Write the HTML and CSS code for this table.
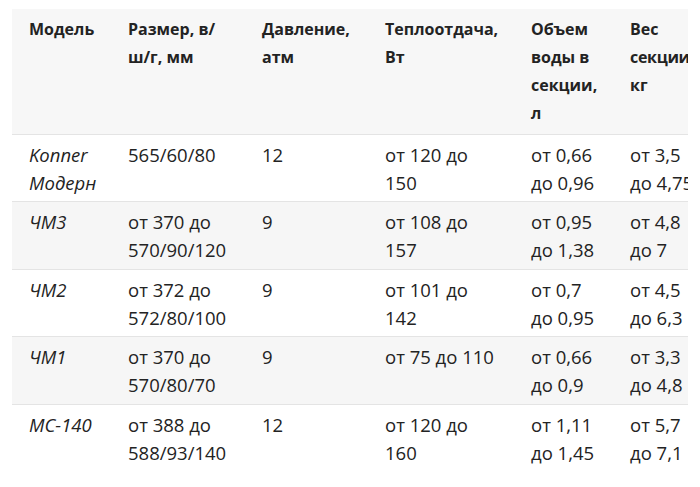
FILE: index.html
```html
<!DOCTYPE html>
<html lang="ru">
<head>
<meta charset="utf-8">
<title>Таблица радиаторов</title>
<link rel="stylesheet" href="styles.css">
</head>
<body>
<div class="wrap">
  <table class="spec">
    <colgroup>
      <col class="c1"><col class="c2"><col class="c3"><col class="c4"><col class="c5"><col class="c6">
    </colgroup>
    <thead>
      <tr>
        <th>Модель</th>
        <th>Размер, в/<wbr><span class="nw">ш/г,</span> мм</th>
        <th>Давление, атм</th>
        <th>Теплоотдача, Вт</th>
        <th>Объем воды в секции, л</th>
        <th>Вес <span class="tight">секции</span> кг</th>
      </tr>
    </thead>
    <tbody>
      <tr>
        <td class="model">Konner Модерн</td>
        <td>565/60/80</td>
        <td>12</td>
        <td>от 120 до 150</td>
        <td>от 0,66 до 0,96</td>
        <td>от 3,5 до 4,75</td>
      </tr>
      <tr class="alt">
        <td class="model">ЧМ3</td>
        <td>от 370 до 570/90/120</td>
        <td>9</td>
        <td>от 108 до 157</td>
        <td>от 0,95 до 1,38</td>
        <td>от 4,8 до 7</td>
      </tr>
      <tr>
        <td class="model">ЧМ2</td>
        <td>от 372 до 572/80/100</td>
        <td>9</td>
        <td>от 101 до 142</td>
        <td>от 0,7 до 0,95</td>
        <td>от 4,5 до 6,3</td>
      </tr>
      <tr class="alt">
        <td class="model">ЧМ1</td>
        <td>от 370 до 570/80/70</td>
        <td>9</td>
        <td>от 75 до 110</td>
        <td>от 0,66 до 0,9</td>
        <td>от 3,3 до 4,8</td>
      </tr>
      <tr class="last">
        <td class="model">МС-140</td>
        <td>от 388 до 588/93/140</td>
        <td>12</td>
        <td>от 120 до 160</td>
        <td>от 1,11 до 1,45</td>
        <td>от 5,7 до 7,1</td>
      </tr>
    </tbody>
  </table>
</div>
</body>
</html>
```
FILE: styles.css
```css
html, body {
  margin: 0;
  padding: 0;
  background: #ffffff;
}

.wrap {
  margin: 9px 0 0 12px;
  width: 676px;
  overflow: hidden;
}

.spec {
  border-collapse: collapse;
  table-layout: fixed;
  width: 701px;
  font-family: "Open Sans", "Noto Sans", sans-serif;
  color: #232323;
}

.c1 { width: 99px; }
.c2 { width: 134px; }
.c3 { width: 123px; }
.c4 { width: 146px; }
.c5 { width: 99px; }
.c6 { width: 100px; }

.spec th,
.spec td {
  text-align: left;
  vertical-align: top;
  padding: 6px 15px 4.5px 17px;
  line-height: 28px;
}

.spec th {
  font-size: 16px;
  font-weight: 700;
  background: #f7f7f7;
  border-bottom: 1px solid #e4e4e4;
  padding-bottom: 6.5px;
}

.spec td {
  font-size: 18.5px;
  font-weight: 400;
  border-bottom: 1px solid #e4e4e4;
}

.nw {
  white-space: nowrap;
}

.tight {
  letter-spacing: -0.3px;
}

.spec tr.alt td {
  background: #f6f6f6;
}

.spec tr.last td {
  border-bottom: none;
}

.spec td.model {
  font-style: italic;
}
```
